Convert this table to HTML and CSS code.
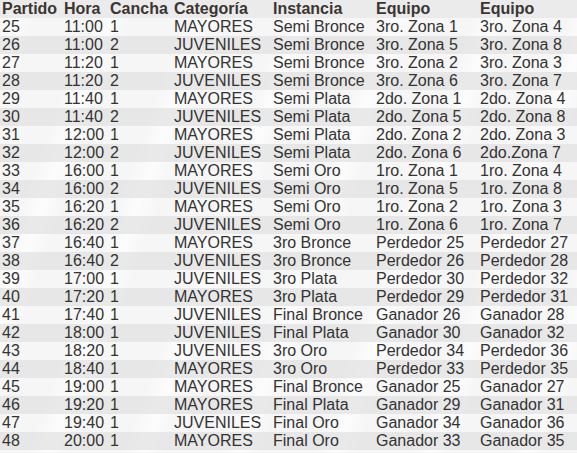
FILE: index.html
```html
<!DOCTYPE html>
<html lang="es">
<head>
<meta charset="utf-8">
<title>Fixture</title>
<link rel="stylesheet" href="styles.css">
</head>
<body>
<table class="fixture">
<colgroup>
<col class="c-partido"><col class="c-hora"><col class="c-cancha"><col class="c-cat"><col class="c-inst"><col class="c-eq"><col class="c-eq2">
</colgroup>
<thead>
<tr><th>Partido</th><th>Hora</th><th>Cancha</th><th>Categoría</th><th>Instancia</th><th>Equipo</th><th>Equipo</th></tr>
</thead>
<tbody>
<tr><td>25</td><td>11:00</td><td>1</td><td>MAYORES</td><td>Semi Bronce</td><td>3ro. Zona 1</td><td>3ro. Zona 4</td></tr>
<tr><td>26</td><td>11:00</td><td>2</td><td>JUVENILES</td><td>Semi Bronce</td><td>3ro. Zona 5</td><td>3ro. Zona 8</td></tr>
<tr><td>27</td><td>11:20</td><td>1</td><td>MAYORES</td><td>Semi Bronce</td><td>3ro. Zona 2</td><td>3ro. Zona 3</td></tr>
<tr><td>28</td><td>11:20</td><td>2</td><td>JUVENILES</td><td>Semi Bronce</td><td>3ro. Zona 6</td><td>3ro. Zona 7</td></tr>
<tr><td>29</td><td>11:40</td><td>1</td><td>MAYORES</td><td>Semi Plata</td><td>2do. Zona 1</td><td>2do. Zona 4</td></tr>
<tr><td>30</td><td>11:40</td><td>2</td><td>JUVENILES</td><td>Semi Plata</td><td>2do. Zona 5</td><td>2do. Zona 8</td></tr>
<tr><td>31</td><td>12:00</td><td>1</td><td>MAYORES</td><td>Semi Plata</td><td>2do. Zona 2</td><td>2do. Zona 3</td></tr>
<tr><td>32</td><td>12:00</td><td>2</td><td>JUVENILES</td><td>Semi Plata</td><td>2do. Zona 6</td><td>2do.Zona 7</td></tr>
<tr><td>33</td><td>16:00</td><td>1</td><td>MAYORES</td><td>Semi Oro</td><td>1ro. Zona 1</td><td>1ro. Zona 4</td></tr>
<tr><td>34</td><td>16:00</td><td>2</td><td>JUVENILES</td><td>Semi Oro</td><td>1ro. Zona 5</td><td>1ro. Zona 8</td></tr>
<tr><td>35</td><td>16:20</td><td>1</td><td>MAYORES</td><td>Semi Oro</td><td>1ro. Zona 2</td><td>1ro. Zona 3</td></tr>
<tr><td>36</td><td>16:20</td><td>2</td><td>JUVENILES</td><td>Semi Oro</td><td>1ro. Zona 6</td><td>1ro. Zona 7</td></tr>
<tr><td>37</td><td>16:40</td><td>1</td><td>MAYORES</td><td>3ro Bronce</td><td>Perdedor 25</td><td>Perdedor 27</td></tr>
<tr><td>38</td><td>16:40</td><td>2</td><td>JUVENILES</td><td>3ro Bronce</td><td>Perdedor 26</td><td>Perdedor 28</td></tr>
<tr><td>39</td><td>17:00</td><td>1</td><td>JUVENILES</td><td>3ro Plata</td><td>Perdedor 30</td><td>Perdedor 32</td></tr>
<tr><td>40</td><td>17:20</td><td>1</td><td>MAYORES</td><td>3ro Plata</td><td>Perdedor 29</td><td>Perdedor 31</td></tr>
<tr><td>41</td><td>17:40</td><td>1</td><td>JUVENILES</td><td>Final Bronce</td><td>Ganador 26</td><td>Ganador 28</td></tr>
<tr><td>42</td><td>18:00</td><td>1</td><td>JUVENILES</td><td>Final Plata</td><td>Ganador 30</td><td>Ganador 32</td></tr>
<tr><td>43</td><td>18:20</td><td>1</td><td>JUVENILES</td><td>3ro Oro</td><td>Perdedor 34</td><td>Perdedor 36</td></tr>
<tr><td>44</td><td>18:40</td><td>1</td><td>MAYORES</td><td>3ro Oro</td><td>Perdedor 33</td><td>Perdedor 35</td></tr>
<tr><td>45</td><td>19:00</td><td>1</td><td>MAYORES</td><td>Final Bronce</td><td>Ganador 25</td><td>Ganador 27</td></tr>
<tr><td>46</td><td>19:20</td><td>1</td><td>MAYORES</td><td>Final Plata</td><td>Ganador 29</td><td>Ganador 31</td></tr>
<tr><td>47</td><td>19:40</td><td>1</td><td>JUVENILES</td><td>Final Oro</td><td>Ganador 34</td><td>Ganador 36</td></tr>
<tr><td>48</td><td>20:00</td><td>1</td><td>MAYORES</td><td>Final Oro</td><td>Ganador 33</td><td>Ganador 35</td></tr>
</tbody>
</table>
</body>
</html>
```
FILE: styles.css
```css
html, body {
  margin: 0;
  padding: 0;
}
body {
  background-color: #f6f6f6;
  background-image: repeating-linear-gradient(110deg, rgba(255,255,255,0) 0px, rgba(255,255,255,0.7) 20px, rgba(255,255,255,0) 40px, rgba(255,255,255,0) 90px);
  font-family: "Liberation Sans", Arial, sans-serif;
  font-size: 16px;
  line-height: 18px;
  color: #333333;
  width: 577px;
  height: 453px;
  overflow: hidden;
}
.fixture {
  border-collapse: collapse;
  table-layout: fixed;
  width: 577px;
}
.c-partido { width: 62px; }
.c-hora { width: 46px; }
.c-cancha { width: 64px; }
.c-cat { width: 99px; }
.c-inst { width: 103px; }
.c-eq { width: 104px; }
.c-eq2 { width: 99px; }
.fixture th,
.fixture td {
  padding: 0 0 0 2px;
  height: 18px;
  text-align: left;
  white-space: nowrap;
  vertical-align: top;
}
.fixture th {
  font-weight: bold;
  color: #3a3632;
  background: #ebebeb;
}
.fixture tbody tr:nth-child(even) td {
  background: rgba(225,225,225,0.7);
}
```
